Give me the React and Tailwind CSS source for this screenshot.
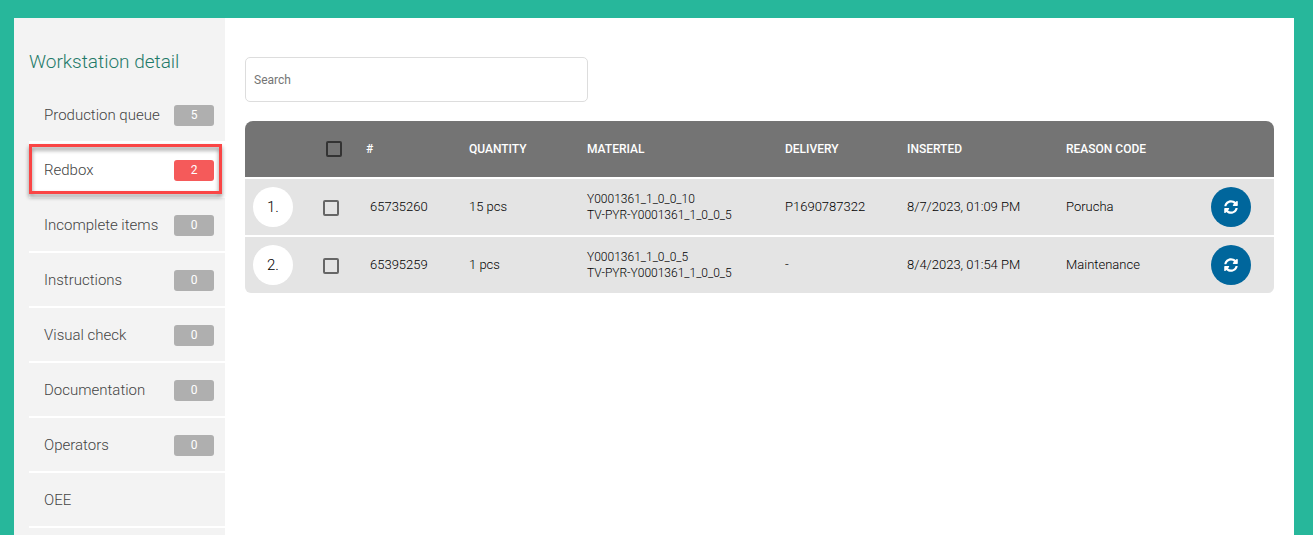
import React from 'react';
import { FaSyncAlt } from 'react-icons/fa';

const menuItems = [
    { name: 'Production queue', count: 5 },
    { name: 'Redbox', count: 2, active: true },
    { name: 'Incomplete items', count: 0 },
    { name: 'Instructions', count: 0 },
    { name: 'Visual check', count: 0 },
    { name: 'Documentation', count: 0 },
    { name: 'Operators', count: 0 },
    { name: 'OEE' },
];

const rows = [
    {
        id: '65735260',
        quantity: '15 pcs',
        material: ['Y0001361_1_0_0_10', 'TV-PYR-Y0001361_1_0_0_5'],
        delivery: 'P1690787322',
        inserted: '8/7/2023, 01:09 PM',
        reason: 'Porucha',
    },
    {
        id: '65395259',
        quantity: '1 pcs',
        material: ['Y0001361_1_0_0_5', 'TV-PYR-Y0001361_1_0_0_5'],
        delivery: '-',
        inserted: '8/4/2023, 01:54 PM',
        reason: 'Maintenance',
    },
];

const Checkbox = ({ label, className }) => (
    <input
        type="checkbox"
        aria-label={label}
        className={`block size-4 appearance-none rounded-xs border-2 checked:bg-[#00669c] ${className}`}
    />
);

const Sidebar = () => (
    <aside className="w-[211px] shrink-0 bg-[#f3f3f3] pl-[15px] pt-8">
        <h1 className="mb-3.5 text-[19px] leading-6 font-light text-[#1f7a69]">Workstation detail</h1>
        <nav>
            {menuItems.map((item) => (
                <a
                    key={item.name}
                    href="#"
                    className={`relative flex h-[55px] items-center justify-between border-b-2 border-white pt-0.5 pl-[15px] pr-[11px] text-[15px] font-light text-[#444] ${item.active ? 'bg-white' : ''}`}
                >
                    <span>{item.name}</span>
                    {item.count !== undefined && (
                        <span className={`h-[21px] w-10 rounded-[3px] text-center text-[12px] leading-[21px] font-normal text-white ${item.active ? 'bg-[#f55a5a]' : 'bg-[#afafaf]'}`}>
                            {item.count}
                        </span>
                    )}
                    {item.active && (
                        <span className="pointer-events-none absolute top-px right-[3px] bottom-[2px] left-0 z-10 border-3 border-[#fa4545] drop-shadow-[0_3px_2px_rgba(0,0,0,0.45)]"></span>
                    )}
                </a>
            ))}
        </nav>
    </aside>
);

const RedboxTable = () => (
    <table className="w-full table-fixed border-separate border-spacing-0 text-left text-[13px] leading-4 font-light text-black">
        <colgroup>
            <col className="w-[62px]" />
            <col className="w-[59px]" />
            <col className="w-[103px]" />
            <col className="w-[118px]" />
            <col />
            <col className="w-[122px]" />
            <col className="w-[159px]" />
            <col className="w-[145px]" />
            <col className="w-[63px]" />
        </colgroup>
        <thead>
            <tr className="h-14 text-[12px] text-white uppercase [&>th]:bg-[#747474] [&>th]:font-medium">
                <th className="rounded-tl-lg"></th>
                <th className="pl-[19px]"><Checkbox label="Select all" className="border-[#333]" /></th>
                <th>#</th>
                <th>Quantity</th>
                <th>Material</th>
                <th>Delivery</th>
                <th>Inserted</th>
                <th>Reason code</th>
                <th className="rounded-tr-lg"></th>
            </tr>
        </thead>
        <tbody>
            {rows.map((row, index) => (
                <tr
                    key={row.id}
                    className="h-[58px] [&>td]:border-t-2 [&>td]:border-white [&>td]:bg-[#e4e4e4] last:[&>td:first-child]:rounded-bl-md last:[&>td:last-child]:rounded-br-md"
                >
                    <td className="pl-2">
                        <div className="flex size-10 items-center justify-center rounded-full bg-white text-[15px] text-black">{index + 1}.</div>
                    </td>
                    <td className="pt-0.5 pl-4"><Checkbox label={`Select ${row.id}`} className="border-[#666]" /></td>
                    <td className="pl-1">{row.id}</td>
                    <td>{row.quantity}</td>
                    <td className="text-[12px]">
                        {row.material.map((line) => <div key={line}>{line}</div>)}
                    </td>
                    <td>{row.delivery}</td>
                    <td>{row.inserted}</td>
                    <td>{row.reason}</td>
                    <td>
                        <button type="button" aria-label="Refresh" className="flex size-10 items-center justify-center rounded-full bg-[#00669c] text-white">
                            <FaSyncAlt size={14} />
                        </button>
                    </td>
                </tr>
            ))}
        </tbody>
    </table>
);

const App = () => {
    return (
        <div className="flex min-h-screen flex-col bg-[#27b79b] pt-[18px] pr-[19px] pl-[14px] font-[Roboto,sans-serif]">
            <div className="flex flex-1 bg-white">
                <Sidebar />
                <main className="min-w-0 flex-1 px-5 pt-[39px]">
                    <input
                        type="text"
                        placeholder="Search"
                        aria-label="Search"
                        className="mb-[19px] block h-[45px] w-[343px] max-w-full rounded-[5px] border border-[#ddd] px-2 text-[12px] placeholder:text-[#757575]"
                    />
                    <RedboxTable />
                </main>
            </div>
        </div>
    );
};

export default App;
